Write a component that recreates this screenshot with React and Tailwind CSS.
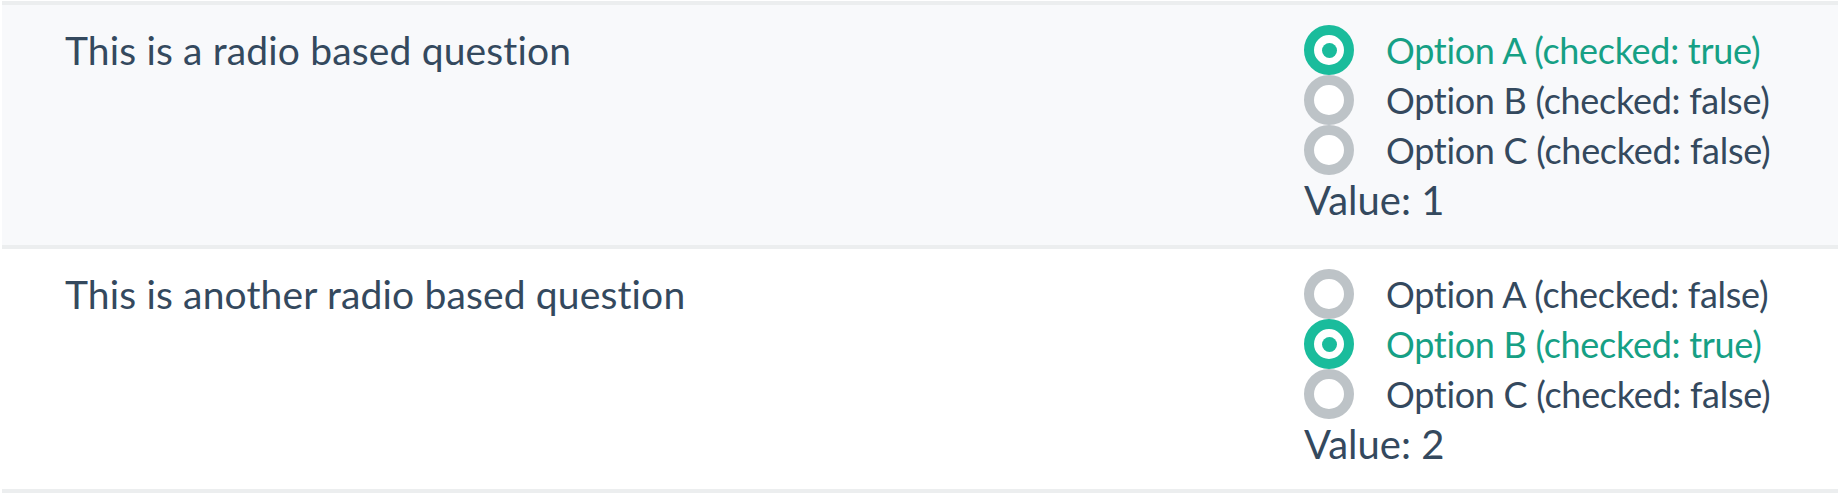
const questions = [
  { id: 1, text: "This is a radio based question", value: 1, bg: "bg-[#f8f9fb]" },
  { id: 2, text: "This is another radio based question", value: 2, bg: "bg-white" },
];

const options = [
  { value: 1, label: "Option A" },
  { value: 2, label: "Option B" },
  { value: 3, label: "Option C" },
];

function Radio({ checked }) {
  return (
    <span
      className={`flex h-[50px] w-[50px] shrink-0 items-center justify-center rounded-full border-[10px] bg-white ${
        checked ? "border-[#1abc9c]" : "border-[#bdc3c7]"
      }`}
    >
      {checked && <span className="h-[15px] w-[15px] rounded-full bg-[#1abc9c]" />}
    </span>
  );
}

function QuestionRow({ question }) {
  return (
    <div className={`flex border-t-4 border-[#eceeef] pt-5 pb-5 ${question.bg}`}>
      <div className="flex-1 pl-[63px] text-[39px] leading-[50px] tracking-[0.15px]">{question.text}</div>
      <div className="w-[534px]">
        {options.map((option) => {
          const checked = option.value === question.value;
          return (
            <label key={option.value} className="flex h-[50px] items-center gap-8">
              <Radio checked={checked} />
              <span className={`text-[36px] tracking-[-0.3px] ${checked ? "text-[#16a085]" : ""}`}>
                {option.label} (checked: {String(checked)})
              </span>
            </label>
          );
        })}
        <div className="text-[40px] leading-[50px]">Value: {question.value}</div>
      </div>
    </div>
  );
}

export default function App() {
  return (
    <div className="min-h-[496px] bg-white px-[2px] pt-px text-[#34495e]" style={{ fontFamily: "Lato, sans-serif" }}>
      {questions.map((q) => (
        <QuestionRow key={q.id} question={q} />
      ))}
      <div className="border-t-4 border-[#eceeef]" />
    </div>
  );
}
